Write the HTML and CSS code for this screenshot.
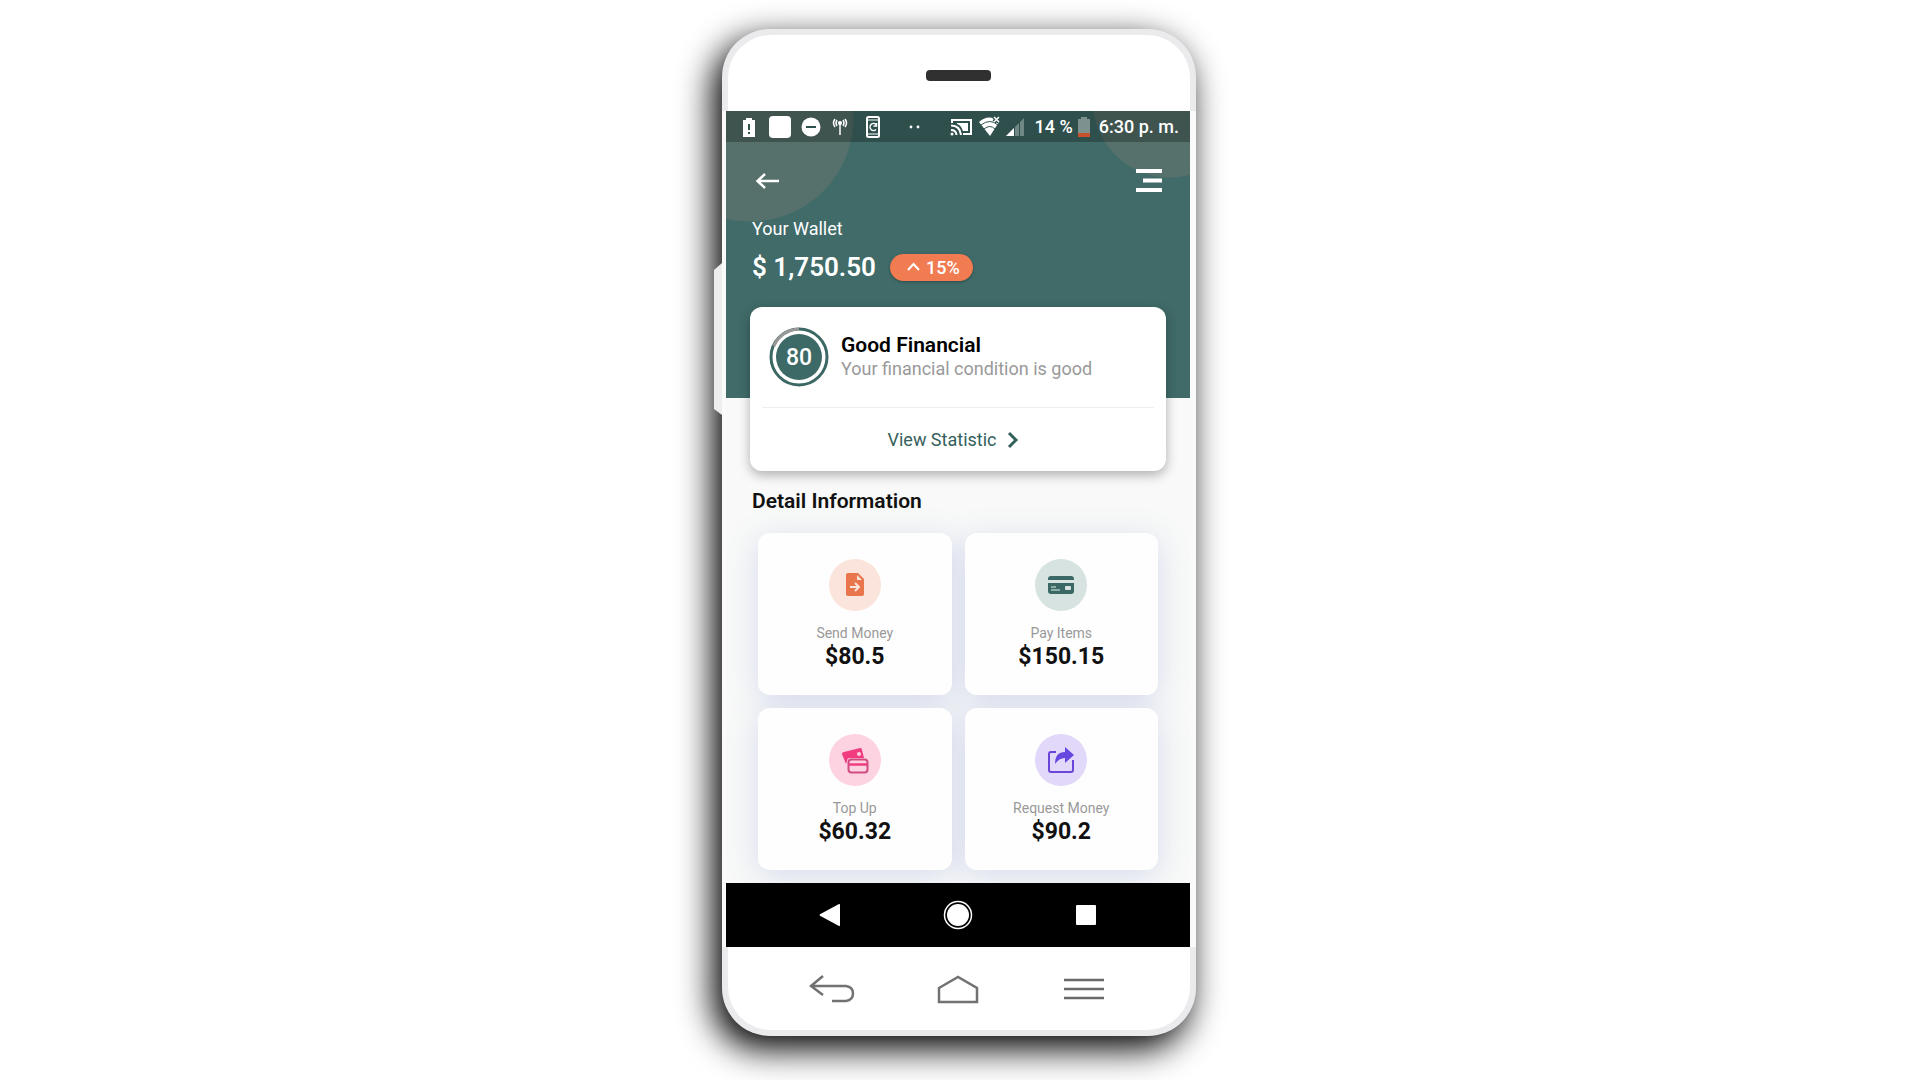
FILE: index.html
```
<!DOCTYPE html>
<html lang="en">
<head>
<meta charset="utf-8">
<meta name="viewport" content="width=device-width, initial-scale=1">
<title>Your Wallet</title>
<link rel="stylesheet" href="styles.css">
</head>
<body>
<main class="phone">
  <div class="bezel bezel-top"><span class="speaker"></span></div>
  <div class="display">
    <div class="screen">
      <header class="hero">
        <div class="status">
          <div class="status-left">
            <svg width="24" height="24" viewBox="0 0 24 24"><path fill="#fff" d="M6 5h3V3h6v2h3v17H6z"/><path d="M12 9v6M12 17v2" stroke="#2f514e" stroke-width="2"/></svg>
            <svg width="24" height="24" viewBox="0 0 24 24"><rect x="1" y="1" width="22" height="22" rx="4" fill="#fff"/></svg>
            <svg width="24" height="24" viewBox="0 0 24 24"><circle cx="12" cy="12" r="9.5" fill="#fff"/><path d="M7 12h10" stroke="#2f514e" stroke-width="2"/></svg>
            <svg width="24" height="24" viewBox="0 0 24 24" fill="none" stroke="#fff" stroke-width="1.5"><path d="M10 9v11M7 5q-2 3 0 6M13 5q2 3 0 6M5 4q-3 4 0 8M15 4q3 4 0 8"/><circle cx="10" cy="8" r="1.3" fill="#fff"/></svg>
            <svg width="24" height="24" viewBox="0 0 24 24" fill="none" stroke="#fff"><rect x="6" y="2" width="12" height="20" rx="1.5" stroke-width="2"/><path d="M6 5h12M6 19h12" stroke-width="1"/><path d="M15 9.5a3.5 3.5 0 1 0 0 5M15.500 8v3h-3" stroke-width="1.500"/></svg>
            <svg class="dots" width="24" height="24" viewBox="0 0 24 24" fill="#fff"><circle cx="8" cy="12" r="1.400"/><circle cx="15" cy="12" r="1.400"/></svg>
          </div>
          <div class="status-right">
            <svg width="24" height="24" viewBox="0 0 24 24"><path d="M3 8V5h19v14h-8" fill="none" stroke="#fff" stroke-width="2"/><path d="M8 8h11v8h-5Q12 10 8 9z" fill="#fff"/><path d="M2 10.500q9 0 10 9.500M2 15q5 0 5.500 5" fill="none" stroke="#fff" stroke-width="2"/><circle cx="3" cy="19" r="1.500" fill="#fff"/></svg>
            <svg width="24" height="24" viewBox="0 0 24 24"><path d="M2 7Q12-2 22 7L13 21z" fill="#fff"/><path d="M4 10q9-7 17 0M7 14q6-5 11 0" fill="none" stroke="#2f514e" stroke-width="1"/><path d="M17 2l5 5M22 2l-5 5" stroke="#2f514e" stroke-width="4"/><path d="M17 2l5 5M22 2l-5 5" stroke="#fff" stroke-width="1.500"/></svg>
            <svg width="20" height="24" viewBox="0 0 20 24"><path d="M19 3v18H1z" fill="#6f8886"/><path d="M9 13v8H1z" fill="#fff"/><path d="M9.500 10v11M14.500 6v15" stroke="#2f514e"/></svg>
            <span class="status-percent">14 %</span>
            <svg width="14" height="24" viewBox="0 0 14 24"><path d="M1 4h3V2h6v2h3v18H1z" fill="#7d918f"/><path d="M1 18h12v4H1z" fill="#c8502c"/></svg>
            <span class="status-time">6:30 p. m.</span>
          </div>
        </div>
        <div class="toolbar">
          <button class="icon-button" type="button" aria-label="Back"><svg width="26" height="24" viewBox="0 0 26 24" fill="none" stroke="#fff" stroke-width="2.500"><path d="M25 12H3M11 5l-7.500 7 7.500 7"/></svg></button>
          <button class="icon-button" type="button" aria-label="Menu"><svg width="26" height="26" viewBox="0 0 26 26" stroke="#fff" stroke-width="4"><path d="M0 3h26M7 12.500h19M0 22h26"/></svg></button>
        </div>
        <p class="wallet-label">Your Wallet</p>
        <div class="balance">
          <strong class="amount">$ 1,750.50</strong>
          <span class="pill"><svg width="13" height="10" viewBox="0 0 13 10" fill="none" stroke="#fff" stroke-width="2"><path d="M1 8l5.500-6L12 8"/></svg>15%</span>
        </div>
      </header>
      <section class="score-card">
        <div class="score">
          <svg class="ring" width="60" height="60" viewBox="0 0 60 60"><circle cx="30" cy="30" r="28" fill="none" stroke="#3b6864" stroke-width="3"/><path d="M5 19A28 28 0 0 1 30 2" fill="none" stroke="#999" stroke-width="3"/><circle cx="30" cy="30" r="23" fill="#3d6966"/><text x="30" y="38" text-anchor="middle" class="ring-text">80</text></svg>
          <div>
            <h2 class="score-title">Good Financial</h2>
            <p class="score-note">Your financial condition is good</p>
          </div>
        </div>
        <a class="view-link" href="#statistic">View Statistic <svg width="12" height="18" viewBox="0 0 12 18" fill="none" stroke="currentColor" stroke-width="3"><path d="M2 2l7 7-7 7"/></svg></a>
      </section>
      <section class="details">
        <h2 class="details-title">Detail Information</h2>
        <div class="tiles">
          <article class="tile">
            <span class="badge badge-orange"><svg width="28" height="28" viewBox="0 0 28 28"><path d="M5 4q0-2 2-2h10l6 6v15q0 2-2 2H7q-2 0-2-2z" fill="#e9754c"/><path d="M16 4v5h5z" fill="#fbe4db"/><path d="M9 16h9M14 12l4 4-4 4" fill="none" stroke="#fbe4db" stroke-width="2"/></svg></span>
            <h3 class="tile-label">Send Money</h3>
            <p class="tile-value">$80.5</p>
          </article>
          <article class="tile">
            <span class="badge badge-green"><svg width="28" height="28" viewBox="0 0 28 28"><path d="M1 9V8q0-3 3-3h20q3 0 3 3v1zM1 12h26v8q0 3-3 3H4q-3 0-3-3z" fill="#3b6864"/><rect x="18" y="15" width="6" height="4" rx="1" fill="#d7e3e0"/><path d="M4 16h5M4 19h9" stroke="#a8c2be" stroke-width="1.500"/></svg></span>
            <h3 class="tile-label">Pay Items</h3>
            <p class="tile-value">$150.15</p>
          </article>
          <article class="tile">
            <span class="badge badge-pink"><svg width="28" height="28" viewBox="0 0 28 28"><path d="M1 8q0-2 2-2l16-4q2 0 2 2l2 8H9q-3 0-3 3l-1 3z" fill="#f13d80"/><circle cx="18" cy="8" r="2" fill="#fdd3e2"/><rect x="7.500" y="13.500" width="19" height="13" rx="3" fill="#fdd3e2" stroke="#d14b80" stroke-width="2"/><path d="M8 18.500h18" stroke="#f13d80" stroke-width="2.500"/></svg></span>
            <h3 class="tile-label">Top Up</h3>
            <p class="tile-value">$60.32</p>
          </article>
          <article class="tile">
            <span class="badge badge-purple"><svg width="28" height="28" viewBox="0 0 28 28"><path d="M9 6H4Q2 6 2 8v16q0 2 2 2h20q2 0 2-2V14" fill="none" stroke="#6a45d8" stroke-width="2"/><path d="M8 18Q8 6 18 6V1l9 8-9 8v-5q-6 0-10 6z" fill="#6846e0"/></svg></span>
            <h3 class="tile-label">Request Money</h3>
            <p class="tile-value">$90.2</p>
          </article>
        </div>
      </section>
    </div>
    <nav class="nav nav-system" aria-label="System">
      <button class="icon-button" type="button" aria-label="Back"><svg width="24" height="28" viewBox="0 0 24 28"><path d="M2 13.300L21 3q1-.5 1 1v20q0 1.500-1 1L2 14.700q-1-.7 0-1.400z" fill="#fff"/></svg></button>
      <button class="icon-button" type="button" aria-label="Home"><svg width="30" height="30" viewBox="0 0 30 30"><circle cx="15" cy="15" r="13.500" fill="none" stroke="#fff" stroke-width="1.500"/><circle cx="15" cy="15" r="11" fill="#fff"/></svg></button>
      <button class="icon-button" type="button" aria-label="Recent apps"><svg width="20" height="20" viewBox="0 0 20 20"><rect width="20" height="20" rx="1" fill="#fff"/></svg></button>
    </nav>
  </div>
  <nav class="bezel nav nav-hardware" aria-label="Hardware keys">
    <button class="icon-button" type="button" aria-label="Back"><svg width="46" height="30" viewBox="0 0 46 30" fill="none" stroke="#727272" stroke-width="2.500"><path d="M14 2L2 12l12 9M2 12h35q7 1 7 7.500T37 27H23"/></svg></button>
    <button class="icon-button" type="button" aria-label="Home"><svg width="42" height="30" viewBox="0 0 42 30" fill="none" stroke="#727272" stroke-width="2.500"><path d="M2 14L21 3l19 11v14H2z"/></svg></button>
    <button class="icon-button" type="button" aria-label="Menu"><svg width="40" height="24" viewBox="0 0 40 24" stroke="#6a6a6a" stroke-width="2.500"><path d="M0 3h40M0 12h40M0 21h40"/></svg></button>
  </nav>
</main>
</body>
</html>
```
FILE: styles.css
```
* { box-sizing: border-box; }
body {
  margin: 0;
  min-height: 100vh;
  padding: 29px 18px 45px 16px;
  display: flex;
  justify-content: center;
  align-items: flex-start;
  background: #fff;
  font-family: Roboto, "Liberation Sans", sans-serif;
  color: #111;
}
h2, h3, p { margin: 0; font-weight: 400; }
svg { display: block; flex: none; }
.icon-button { padding: 0; border: 0; background: none; display: flex; cursor: pointer; }

.phone {
  position: relative;
  width: 100%;
  max-width: 474px;
  padding: 6px 0;
  border-radius: 48px;
  background: #ebebed;
  box-shadow: -8px 12px 34px 1px #000;
}
/* volume key on the left edge */
.phone::before {
  content: "";
  position: absolute;
  left: -8px;
  top: 234px;
  width: 8px;
  height: 152px;
  background: #ededed;
  clip-path: polygon(0 7px, 100% 0, 100% 100%, 0 146px);
}
.bezel { margin: 0 6px; background: #fff; }
.bezel-top {
  display: flex;
  justify-content: center;
  padding: 35px 2px 30px 0;
  border-radius: 43px 43px 0 0;
}
.speaker { width: 65px; height: 11px; border-radius: 4px; background: #303030; }
.display { padding: 0 6px 0 4px; background: #fafafa; }
.screen { background: #f8f9f8; padding-bottom: 13px; overflow: hidden; }

.hero {
  height: 287px;
  color: #fff;
  background:
    radial-gradient(circle at 24px 7px, #56706b 103px, transparent 104px),
    radial-gradient(circle at 444px -11px, #56706b 77px, transparent 78px),
    #406b69;
}
.status {
  height: 31px;
  padding: 0 11px;
  display: flex;
  align-items: center;
  justify-content: space-between;
  background: rgba(0, 0, 0, .26);
  font-size: 18px;
  font-weight: 500;
  white-space: nowrap;
}
.status-left { display: flex; gap: 7px; }
.status-right { display: flex; align-items: center; gap: 4px; }
.status-percent { margin-left: 6px; }
.status-time { margin-left: 4px; }
.dots { margin-left: 11px; }
.toolbar {
  display: flex;
  align-items: center;
  justify-content: space-between;
  padding: 26px 28px 0;
}
.wallet-label { padding: 23px 26px 0; font-size: 18px; line-height: 24px; }
.balance { display: flex; align-items: center; gap: 14px; padding: 10px 26px 0; }
.amount { font-size: 26px; line-height: 32px; font-weight: 600; }
.pill {
  display: flex;
  align-items: center;
  gap: 6px;
  height: 27px;
  padding: 0 13px 0 17px;
  border-radius: 14px;
  background: #f17c52;
  box-shadow: 0 1px 3px rgba(0, 0, 0, .3);
  font-size: 18px;
  font-weight: 500;
}

.score-card {
  position: relative;
  margin: -91px 24px 0;
  padding: 0 12px;
  border-radius: 12px;
  background: #fff;
  box-shadow: 0 4px 12px rgba(0, 0, 0, .3);
}
.score {
  display: flex;
  align-items: center;
  gap: 12px;
  height: 101px;
  padding: 0 7px 1px;
  border-bottom: 1px solid #eee;
}
.ring-text { fill: #fff; font-size: 23px; font-weight: 500; }
.score-title { font-size: 21px; line-height: 24px; font-weight: 600; color: #000; }
.score-note { font-size: 18px; line-height: 24px; color: #999; }
.view-link {
  display: flex;
  align-items: center;
  justify-content: center;
  gap: 11px;
  height: 63px;
  padding-right: 9px;
  color: #34605c;
  font-size: 18px;
  text-decoration: none;
}

.details { padding: 17px 26px 0; }
.details-title { font-size: 21px; line-height: 26px; font-weight: 600; }
.tiles {
  display: grid;
  grid-template-columns: 1fr 1fr;
  gap: 13px;
  padding: 19px 6px 0;
}
.tile {
  position: relative;
  display: flex;
  flex-direction: column;
  align-items: center;
  padding: 26px 0 24px;
}
/* the glow sits below every tile, the white face above all glows */
.tile::before, .tile::after { content: ""; position: absolute; inset: 0; border-radius: 12px; }
.tile::before { box-shadow: 0 6px 32px rgba(100, 120, 200, .22); }
.tile::after { z-index: 1; background: #fefefe; }
.tile > * { position: relative; z-index: 2; }
.badge { display: flex; align-items: center; justify-content: center; width: 52px; height: 52px; border-radius: 50%; }
.badge-orange { background: #fbe4db; }
.badge-green { background: #d7e3e0; }
.badge-pink { background: #fdd3e2; }
.badge-purple { background: #e2d8fa; }
.tile-label { margin-top: 12px; font-size: 14px; line-height: 20px; color: #999; }
.tile-value { font-size: 23px; line-height: 28px; font-weight: 700; }

.nav {
  display: grid;
  grid-template-columns: repeat(3, 128px);
  justify-content: center;
  justify-items: center;
  align-items: center;
}
.nav-system { height: 64px; background: #000; }
.nav-hardware { grid-template-columns: repeat(3, 126px); padding: 27px 2px 26px 0; border-radius: 0 0 43px 43px; }
```
